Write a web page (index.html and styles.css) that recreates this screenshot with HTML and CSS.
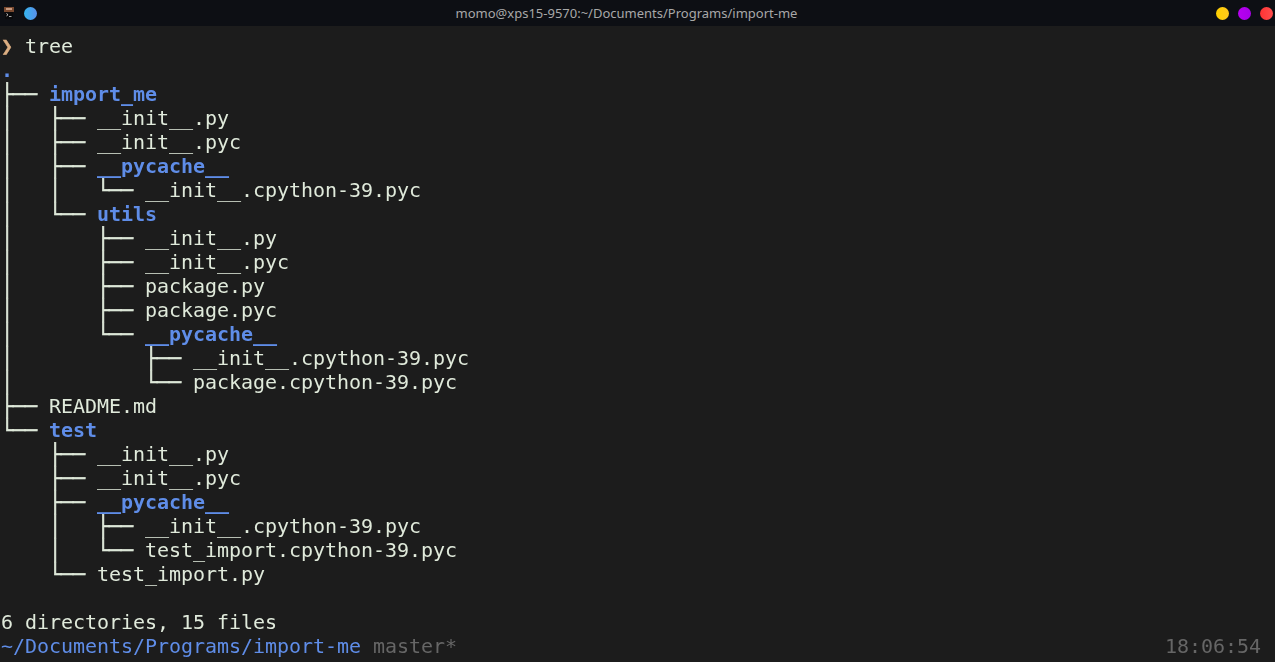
FILE: index.html
```html
<!DOCTYPE html>
<html lang="en">
<head>
<meta charset="utf-8">
<title>momo@xps15-9570:~/Documents/Programs/import-me</title>
<link rel="stylesheet" href="styles.css">
</head>
<body>
<div class="window">
  <header class="titlebar">
    <div class="title-left">
      <svg class="app-icon" width="14" height="14" viewBox="0 0 14 14" aria-hidden="true">
        <rect x="2" y="1" width="10" height="5" fill="#7a4a30"/>
        <rect x="4" y="2" width="6" height="2" fill="#c89a80"/>
        <rect x="3" y="6" width="8" height="7" fill="#0a0a0c"/>
        <path d="M4.5 7.5l1.5 1.2-1.5 1.2" stroke="#c8c8c8" stroke-width="1" fill="none"/>
        <rect x="7" y="10" width="2.5" height="1" fill="#a8a8a8"/>
      </svg>
      <span class="dot dot-blue"></span>
    </div>
    <div class="title-text">momo@xps15-9570:~/Documents/Programs/import-me</div>
    <div class="title-right">
      <span class="dot dot-yellow"></span>
      <span class="dot dot-purple"></span>
      <span class="dot dot-red"></span>
    </div>
  </header>
  <main class="terminal">
<div class="line"><span class="arrow">❯</span> tree</div>
<div class="line"><b class="dir">.</b></div>
<div class="line"><span class="rule">├── </span><b class="dir">import_me</b></div>
<div class="line"><span class="rule">│   ├── </span>__init__.py</div>
<div class="line"><span class="rule">│   ├── </span>__init__.pyc</div>
<div class="line"><span class="rule">│   ├── </span><b class="dir">__pycache__</b></div>
<div class="line"><span class="rule">│   │   └── </span>__init__.cpython-39.pyc</div>
<div class="line"><span class="rule">│   └── </span><b class="dir">utils</b></div>
<div class="line"><span class="rule">│       ├── </span>__init__.py</div>
<div class="line"><span class="rule">│       ├── </span>__init__.pyc</div>
<div class="line"><span class="rule">│       ├── </span>package.py</div>
<div class="line"><span class="rule">│       ├── </span>package.pyc</div>
<div class="line"><span class="rule">│       └── </span><b class="dir">__pycache__</b></div>
<div class="line"><span class="rule">│           ├── </span>__init__.cpython-39.pyc</div>
<div class="line"><span class="rule">│           └── </span>package.cpython-39.pyc</div>
<div class="line"><span class="rule">├── </span>README.md</div>
<div class="line"><span class="rule">└── </span><b class="dir">test</b></div>
<div class="line"><span class="rule">    ├── </span>__init__.py</div>
<div class="line"><span class="rule">    ├── </span>__init__.pyc</div>
<div class="line"><span class="rule">    ├── </span><b class="dir">__pycache__</b></div>
<div class="line"><span class="rule">    │   ├── </span>__init__.cpython-39.pyc</div>
<div class="line"><span class="rule">    │   └── </span>test_import.cpython-39.pyc</div>
<div class="line"><span class="rule">    └── </span>test_import.py</div>
<div class="line">&nbsp;</div>
<div class="line">6 directories, 15 files</div>
<div class="line prompt"><span><span class="path">~/Documents/Programs/import-me</span> <span class="branch">master*</span></span><span class="clock">18:06:54</span></div>
  </main>
</div>
</body>
</html>
```
FILE: styles.css
```css
* { box-sizing: border-box; }
html, body { margin: 0; height: 100%; overflow: hidden; }
body { background: #1c1c1c; }
.window { display: flex; flex-direction: column; height: 662px; }
.titlebar {
  display: flex;
  align-items: center;
  height: 26px;
  background: #0d0f14;
  flex: none;
}
.title-left { display: flex; align-items: center; gap: 8px; width: 37px; padding-left: 2px; flex: none; }
.title-right { display: flex; align-items: center; gap: 9px; width: 59px; flex: none; }
.title-text {
  flex: 1;
  text-align: center;
  font: 13px "Noto Sans", sans-serif;
  color: #a8a8a8;
}
.dot { display: block; width: 13px; height: 13px; border-radius: 50%; flex: none; }
.dot-blue { background: linear-gradient(90deg, #35b6f0, #5a90ea); }
.dot-yellow { background: linear-gradient(90deg, #ffd000, #ffc81e); }
.dot-purple { background: linear-gradient(90deg, #b800f0, #a800e8); }
.dot-red { background: linear-gradient(90deg, #ff3333, #ff4d4d); }
.terminal {
  flex: 1;
  padding: 8px 0 0 1px;
  font: 20px/24px "DejaVu Sans Mono", monospace;
  letter-spacing: -0.04px;
  color: #e0eadb;
  will-change: transform;
}
.line { height: 24px; white-space: pre; }
.rule { -webkit-text-stroke: 0.5px #e0eadb; }
.dir { font-weight: 700; color: #5f8de8; }
.arrow { color: #dcae82; -webkit-text-stroke: 0.4px #dcae82; }
.prompt { display: flex; justify-content: space-between; padding-right: 14px; }
.path { color: #5f8de8; }
.branch, .clock { color: #666666; }
```
